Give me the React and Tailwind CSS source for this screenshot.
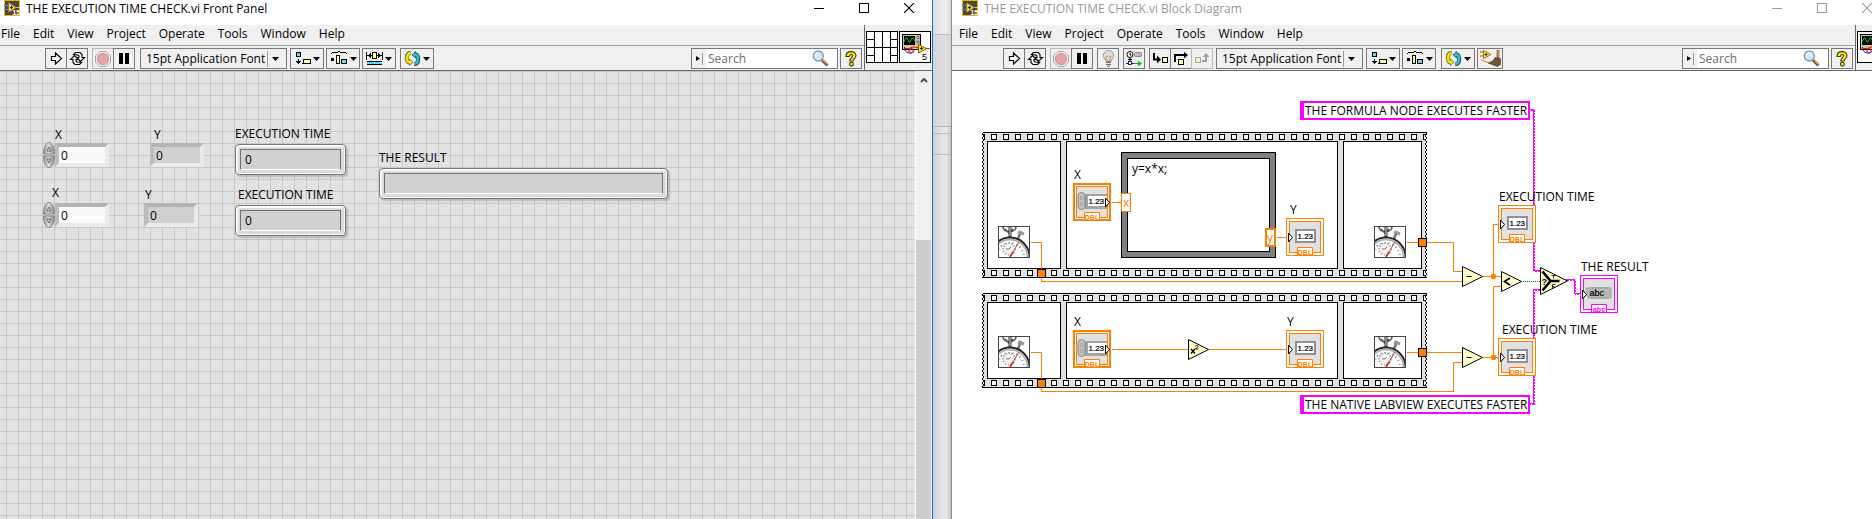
import React from "react";

const ORANGE = "#ff7f00";
const PINK = "#ff00ff";

/* ---------- icons ---------- */

function AppIcon() {
  return (
    <svg className="h-4 w-4 shrink-0" viewBox="0 0 16 16" aria-hidden="true">
      <rect width="16" height="16" fill="#f5b400" />
      <rect x="1" y="1" width="14" height="14" fill="#474747" />
      <path d="M0 5.5h5M0 9.5h5" stroke="#2a8fd0" strokeWidth="1.6" />
      <path d="M11 7.5h5" stroke="#ffd24a" strokeWidth="1" />
      <path d="M4.500 2.500v10l8-5z" fill="#ffc93c" stroke="#8a6508" strokeWidth=".6" />
      <path d="M6 7.500h3M7.500 6v3" stroke="#222" strokeWidth="1" />
      <text x="8.600" y="14.600" fontSize="6.500" fontWeight="700" fill="#fff" fontFamily="Liberation Sans, sans-serif">15</text>
    </svg>
  );
}

function RunIcon() {
  return (
    <svg width="13" height="13" viewBox="0 0 13 13" aria-hidden="true">
      <path d="M1.500 4.500h4v-3.500l6 5.500-6 5.500v-3.500h-4z" fill="#fff" stroke="#000" strokeWidth="1.200" />
    </svg>
  );
}

function ContinuousIcon() {
  return (
    <svg width="17" height="15" viewBox="0 0 17 15" aria-hidden="true">
      <g fill="#fff" stroke="#000" strokeWidth="1.100">
        <path d="M4.500 3.500l2-2h4.500l2 2v3h2.500l-4 4-4-4h2.500v-1.500l-1-1z" />
        <path d="M12.500 11.500l-2 2H6l-2-2v-3H1.500l4-4 4 4H7v1.500l1 1z" />
      </g>
    </svg>
  );
}

function AbortIcon() {
  return (
    <svg width="16" height="16" viewBox="0 0 16 16" aria-hidden="true">
      <path d="M5 .5h6L15.500 5v6L11 15.500H5L.5 11V5z" fill="#f2eaea" stroke="#a5a5a5" />
      <circle cx="8" cy="8" r="5.600" fill="#e2a4a8" stroke="#cd9296" />
    </svg>
  );
}

function PauseIcon() {
  return (
    <svg width="10" height="11" viewBox="0 0 10 11" aria-hidden="true">
      <path d="M0 0h4v11H0zM6 0h4v11H6z" fill="#000" />
    </svg>
  );
}

function Caret() {
  return (
    <svg className="shrink-0" width="7" height="4" viewBox="0 0 7 4" aria-hidden="true">
      <path d="M0 0h7L3.500 4z" fill="#000" />
    </svg>
  );
}

function AlignIcon() {
  return (
    <svg width="16" height="15" viewBox="0 0 16 15" aria-hidden="true" shapeRendering="crispEdges">
      <rect x="1.500" y="1.500" width="4" height="4" fill="#5fdcf5" stroke="#000" />
      <path d="M3.500 8v5M1 10.500h5M2 11.500h3M7 12.500h1" stroke="#000" />
      <rect x="8.500" y="8.500" width="7" height="4" fill="#ffff9c" stroke="#000" />
    </svg>
  );
}

function DistributeIcon() {
  return (
    <svg width="18" height="15" viewBox="0 0 18 15" aria-hidden="true" shapeRendering="crispEdges">
      <path d="M1 2.500h1M2 1.500h6M8 .5h2M10 1.500h6M16 2.500h1" stroke="#000" />
      <rect x="1" y="7" width="3" height="3" fill="#000" />
      <rect x="6.500" y="4.500" width="3" height="8" fill="#ffff9c" stroke="#000" />
      <rect x="11.500" y="8.500" width="5" height="4" fill="#5fdcf5" stroke="#000" />
    </svg>
  );
}

function ResizeIcon() {
  return (
    <svg width="17" height="15" viewBox="0 0 17 15" aria-hidden="true" shapeRendering="crispEdges">
      <path d="M.5 1v8M16.500 1v8M1 4.500h5M11 4.500h5M3.500 3v3M4.500 2v5M12.500 2v5M13.500 3v3" stroke="#000" />
      <rect x="6.500" y="1.500" width="4" height="6" fill="#ffff9c" stroke="#000" />
      <path d="M1 10.500h15M1 13.500h15" stroke="#000" />
      <path d="M1 12h15" stroke="#5fdcf5" strokeWidth="2" />
    </svg>
  );
}

function ReorderIcon() {
  return (
    <svg width="17" height="15" viewBox="0 0 17 15" aria-hidden="true">
      <path d="M7 1.500C3.500 2 2.500 5 3 8.500c.3 2 1.500 3 3 3.200" stroke="#7b760c" strokeWidth="4" fill="none" />
      <path d="M5.500 8v6.500L9 11z" fill="#efe51f" stroke="#7b760c" strokeWidth=".8" />
      <path d="M6.800 1.700C3.500 2.500 2.700 5 3.100 8.500c.3 1.800 1.400 2.800 3 3" stroke="#efe51f" strokeWidth="2.400" fill="none" />
      <path d="M10 13.500c3.500-.5 4.500-3.500 4-7-.3-2-1.500-3-3-3.200" stroke="#14616e" strokeWidth="4" fill="none" />
      <path d="M11.500 7V.5L8 4z" fill="#3fb9cc" stroke="#14616e" strokeWidth=".8" />
      <path d="M10.200 13.300c3.300-.8 4.100-3.300 3.700-6.800-.3-1.800-1.400-2.800-3-3" stroke="#3fb9cc" strokeWidth="2.400" fill="none" />
    </svg>
  );
}

function BulbIcon() {
  return (
    <svg width="13" height="17" viewBox="0 0 13 17" aria-hidden="true">
      <path d="M6.500.5a5 5 0 0 1 3.600 8.600L9 11.500H4L2.900 9.100A5 5 0 0 1 6.500.5z" fill="#dedede" stroke="#9a9a9a" />
      <path d="M4 6l1 5h3l1-5-2 1.500-1-1z" fill="#f6d79a" stroke="#b4905c" strokeWidth=".7" />
      <path d="M4 12.500h5M4 14.500h5M5 16.200h3" stroke="#6c6c6c" />
    </svg>
  );
}

function RetainIcon() {
  return (
    <svg width="17" height="15" viewBox="0 0 17 15" aria-hidden="true">
      <circle cx="4" cy="3.500" r="3" fill="#fff" stroke="#000" />
      <path d="M4 2v2h1.500M4 6.500v4M2 8.500h4" stroke="#000" fill="none" />
      <rect x="8.500" y="1.500" width="7" height="4" rx="1" fill="#bbb" stroke="#888" />
      <path d="M0 12.500h8" stroke="#0010e0" />
      <path d="M8 12.500h5" stroke="#10b010" />
      <rect x="2.500" y="10.500" width="3" height="3" fill="#fff" stroke="#000" strokeWidth=".8" />
      <path d="M12 9.500v6l4-3z" fill="#12c412" />
    </svg>
  );
}

function StepIntoIcon() {
  return (
    <svg width="17" height="13" viewBox="0 0 17 13" aria-hidden="true">
      <path d="M2 1v6.500h4" stroke="#000" strokeWidth="2" fill="none" />
      <path d="M5 3.500l4 4-4 4z" fill="#000" />
      <rect x="10.500" y="5.500" width="5" height="5" fill="#ffff9c" stroke="#000" />
    </svg>
  );
}

function StepOverIcon() {
  return (
    <svg width="17" height="14" viewBox="0 0 17 14" aria-hidden="true">
      <path d="M2 10V3h10" stroke="#000" strokeWidth="2" fill="none" />
      <path d="M11 0l4 3-4 3.500z" fill="#000" />
      <rect x="5.500" y="7.500" width="5" height="5" fill="#ffff9c" stroke="#000" />
    </svg>
  );
}

function StepOutIcon() {
  return (
    <svg width="17" height="13" viewBox="0 0 17 13" aria-hidden="true">
      <rect x="1.500" y="5.500" width="5" height="5" fill="#f6f3c4" stroke="#a8a8a8" />
      <path d="M8 9h4V4" stroke="#a0a0a0" strokeWidth="2" fill="none" />
      <path d="M8.500 5l3.500-4 3.500 4z" fill="#a0a0a0" />
    </svg>
  );
}

function CleanUpIcon() {
  return (
    <svg width="21" height="17" viewBox="0 0 21 17" aria-hidden="true">
      <path d="M0 2h4M0 6h4" stroke="#e02020" />
      <path d="M3.500.5v8l7.500-4z" fill="#fff23a" stroke="#8a7a00" />
      <path d="M4.500 4.500h3M6 3v3" stroke="#000" strokeWidth=".8" />
      <path d="M17 0h2v8h-2z" fill="#c39a5a" stroke="#6b4a1c" strokeWidth=".6" />
      <path d="M15 7.500l5.500 1v6l-3 2L8 13l5-2z" fill="#6d5435" stroke="#3f2d16" strokeWidth=".6" />
      <path d="M1 10l8 3" stroke="#e08030" />
    </svg>
  );
}

function SearchIcon() {
  return (
    <svg className="shrink-0" width="17" height="17" viewBox="0 0 17 17" aria-hidden="true">
      <path d="M10 10l5.500 5.500" stroke="#7a4a2a" strokeWidth="3" />
      <path d="M10.500 9.500l5 5" stroke="#e59a45" strokeWidth="1.400" />
      <circle cx="6.300" cy="6" r="5" fill="#cfeafc" stroke="#7d9ab5" strokeWidth="1.300" />
      <path d="M3.500 5.500a3 3 0 0 1 3-2.500" stroke="#fff" strokeWidth="1.400" fill="none" />
    </svg>
  );
}

function HelpIcon() {
  return (
    <svg width="12" height="16" viewBox="0 0 12 16" aria-hidden="true">
      <path d="M1 5.500C1 1.500 3.500 .6 6 .6s5 1.200 5 4.200c0 2.600-3 3-3 5.200H4.800C4.800 6.800 7.600 6.500 7.600 4.800 7.600 3 4.400 3 4.400 5.500z" fill="#ffee10" stroke="#3a3a00" strokeWidth="1.100" />
      <circle cx="6.400" cy="13.200" r="1.900" fill="#ffee10" stroke="#3a3a00" strokeWidth="1.100" />
    </svg>
  );
}

function ConnectorPane() {
  return (
    <svg className="shrink-0" width="32" height="32" viewBox="0 0 32 32" aria-hidden="true" shapeRendering="crispEdges">
      <rect x=".5" y=".5" width="31" height="31" fill="#fff" stroke="#000" />
      <path d="M8.500 0v32M16.500 0v32M24.500 0v32M0 16.500h32M0 8.500h8M0 24.500h8M24 8.500h8M24 24.500h8" stroke="#000" />
    </svg>
  );
}

function ViIcon({ index }) {
  return (
    <svg className="shrink-0" width="32" height="32" viewBox="0 0 32 32" aria-hidden="true">
      <rect x=".5" y=".5" width="31" height="31" fill="#fff" stroke="#000" />
      <rect x="3.500" y="3.500" width="18" height="15" fill="#cdc9a5" stroke="#000" />
      <rect x="5" y="5" width="11" height="9" fill="#000" />
      <path d="M5 11l2-4h1l2 4h1l2-4h1l2 3" stroke="#10d030" fill="none" />
      <circle cx="19" cy="6.500" r="1.200" fill="#fff" stroke="#000" strokeWidth=".6" />
      <circle cx="19" cy="11" r="1.200" fill="#fff" stroke="#000" strokeWidth=".6" />
      <path d="M5.500 16v2.500c2 4.500 9 4.500 10 1" stroke="#1010c8" fill="none" />
      <path d="M5 17.500h5l4-1.500 5 .5h2M10 21c0-4 4-5 4-1.500s-4 3-4 0" stroke="#e81010" fill="none" />
      <path d="M27 17.500h4" stroke="#e81010" />
      <path d="M19.500 13.500v8.500l8-4.300z" fill="#ffee10" stroke="#6a6000" />
      <path d="M21 17.500h3M22.500 16v3" stroke="#000" strokeWidth=".9" />
      {index && <text x="23" y="29" fontSize="9" fontFamily="Liberation Sans, sans-serif" fill="#000">{index}</text>}
    </svg>
  );
}

/* ---------- window chrome ---------- */

function TitleBar({ title, active, inset }) {
  const stroke = active ? "#000" : "#999";
  return (
    <header className={`flex h-[25px] items-start bg-white ${inset ? "pl-[10px]" : "pl-1"}`}>
      <AppIcon />
      <h1 className={`ml-[6px] flex-1 text-[12px] leading-[17px] whitespace-nowrap ${active ? "text-black" : "text-[#999]"}`}>{title}</h1>
      <div className="flex">
        <button type="button" aria-label="Minimize" className="flex h-4 w-[45px] items-center justify-center">
          <svg width="10" height="10"><path d="M0 5.500h10" stroke={stroke} /></svg>
        </button>
        <button type="button" aria-label="Maximize" className="flex h-4 w-[45px] items-center justify-center">
          <svg width="10" height="10"><rect x=".5" y=".5" width="9" height="9" fill="none" stroke={stroke} /></svg>
        </button>
        <button type="button" aria-label="Close" className="flex h-4 w-[46px] items-center justify-center">
          <svg width="10" height="10"><path d="M0 0l10 10M10 0L0 10" stroke={stroke} strokeWidth="1.200" /></svg>
        </button>
      </div>
    </header>
  );
}

const MENUS = ["File", "Edit", "View", "Project", "Operate", "Tools", "Window", "Help"];

function MenuBar({ inset }) {
  return (
    <nav className={`flex h-5 items-start gap-[13px] pt-px ${inset ? "pl-[7px]" : "pl-px"}`}>
      {MENUS.map((m) => (
        <button key={m} type="button" className="text-[12px] leading-4">{m}</button>
      ))}
    </nav>
  );
}

function Tool({ label, children, faded, join, wide }) {
  return (
    <button
      type="button"
      aria-label={label}
      disabled={faded}
      className={`flex h-[21px] shrink-0 items-center justify-center border ${wide ? "w-[26px]" : "w-[22px]"} ${join ? "-ml-px" : ""} ${faded ? "border-[#b9b9b9]" : "border-[#787878]"}`}
    >
      {children}
    </button>
  );
}

function MenuTool({ label, children }) {
  return (
    <button type="button" aria-label={label} aria-haspopup="menu" className="flex h-[21px] w-[34px] shrink-0 items-center justify-center gap-[2px] border border-[#787878]">
      {children}
      <Caret />
    </button>
  );
}

function FontSelect() {
  return (
    <div className="flex h-[21px] w-[147px] shrink-0 items-center border border-[#787878] pr-[7px]">
      <select aria-label="Text settings" className="min-w-0 flex-1 appearance-none bg-transparent pl-[5px] text-[12px] leading-4" defaultValue="15pt Application Font">
        <option>15pt Application Font</option>
      </select>
      <span className="mr-1 h-4 w-px bg-[#9a9a9a]" />
      <Caret />
    </div>
  );
}

function SearchBox() {
  return (
    <div className="flex items-center gap-[2px] pr-[2px]">
      <div className="flex h-[21px] w-[147px] items-center border border-[#787878] bg-white">
        <button type="button" aria-label="Search scope" className="flex h-full w-[14px] items-center gap-[2px] bg-[#f0f0f0] pl-1">
          <svg width="4" height="5"><path d="M0 0v5l4-2.500z" fill="#000" /></svg>
          <span className="h-3 w-px bg-[#9a9a9a]" />
        </button>
        <input type="search" aria-label="Search" placeholder="Search" className="min-w-0 flex-1 bg-transparent pl-[2px] text-[12px] leading-4 placeholder:text-[#6d6d6d] focus:outline-none" />
        <span className="mr-2 flex"><SearchIcon /></span>
      </div>
      <Tool label="Context help"><HelpIcon /></Tool>
    </div>
  );
}

function Chrome({ inset, tools, pane }) {
  return (
    <div className="flex border-b border-[#696969] bg-[#f0f0f0]">
      <div className="flex min-w-0 flex-1 flex-col">
        <MenuBar inset={inset} />
        <div className={`flex items-center justify-between border-t border-[#a0a0a0] pt-[2px] pb-px ${inset ? "pl-[51px]" : "pl-[45px]"}`}>
          <div className="flex items-center">{tools}</div>
          <SearchBox />
        </div>
      </div>
      <div className="flex gap-px border-l border-[#696969] pt-[6px] pr-px pl-px">{pane}</div>
    </div>
  );
}

/* ---------- front panel ---------- */

function Spinner() {
  return (
    <svg className="shrink-0" width="12" height="26" viewBox="0 0 12 26" aria-hidden="true">
      <defs>
        <linearGradient id="knob" x1="0" x2="1">
          <stop offset="0" stopColor="#8d8d8d" />
          <stop offset=".45" stopColor="#dcdcdc" />
          <stop offset="1" stopColor="#868686" />
        </linearGradient>
      </defs>
      <path d="M.5 12C.5 5 3 .5 6 .5S11.500 5 11.500 12z" fill="url(#knob)" stroke="#8a8a8a" />
      <path d="M.5 14C.5 21 3 25.500 6 25.500S11.500 21 11.500 14z" fill="url(#knob)" stroke="#8a8a8a" />
      <path d="M4 9l2-4 2 4z" fill="#d5d5d5" stroke="#555" strokeWidth=".8" />
      <path d="M4 17l2 4 2-4z" fill="#d5d5d5" stroke="#555" strokeWidth=".8" />
    </svg>
  );
}

const BEVEL = "h-6 w-[54px] border-4 border-t-[#b4b4b4] border-r-[#ebebeb] border-b-[#ebebeb] border-l-[#bcbcbc]";

function NumericControl({ id, label, place, labelPlace }) {
  return (
    <>
      <label htmlFor={id} className={`absolute text-[12px] leading-4 ${labelPlace}`}>{label}</label>
      <div className={`absolute flex items-center ${place}`}>
        <Spinner />
        <input id={id} defaultValue="0" inputMode="decimal" className={`${BEVEL} bg-[#fafafa] pl-[2px] text-[12px] leading-4`} />
      </div>
    </>
  );
}

function NumericIndicator({ id, label, place, labelPlace }) {
  return (
    <>
      <label htmlFor={id} className={`absolute text-[12px] leading-4 ${labelPlace}`}>{label}</label>
      <output id={id} className={`absolute bg-[#d0d0d0] pl-[2px] text-[12px] leading-[17px] ${BEVEL} ${place}`}>0</output>
    </>
  );
}

function FramedIndicator({ id, label, value, place, labelPlace }) {
  return (
    <>
      <label htmlFor={id} className={`absolute text-[12px] leading-4 whitespace-nowrap ${labelPlace}`}>{label}</label>
      <div className={`absolute h-[31px] rounded-[4px] border border-[#7c7c7c] bg-[#dcdcdc] p-1 shadow-[2px_2px_2px_#00000030,inset_1px_1px_0_1px_#fafafa,inset_-1px_-1px_0_#f4f4f4] ${place}`}>
        <output id={id} className="block h-full border border-t-[#707070] border-r-[#707070] border-b-white border-l-[#707070] bg-[#d1d1d1] pl-1 text-[12px] leading-5">{value}</output>
      </div>
    </>
  );
}

function FrontPanel() {
  return (
    <section className="flex w-[calc(50%-3px)] shrink-0 flex-col border-r border-[#0078d7]">
      <TitleBar title="THE EXECUTION TIME CHECK.vi Front Panel" active />
      <Chrome
        tools={
          <>
            <Tool label="Run"><RunIcon /></Tool>
            <Tool label="Run continuously" join><ContinuousIcon /></Tool>
            <span className="w-1" />
            <Tool label="Abort" faded><AbortIcon /></Tool>
            <Tool label="Pause" join><PauseIcon /></Tool>
            <span className="w-[5px]" />
            <FontSelect />
            <div className="ml-[3px] flex gap-[2px]">
              <MenuTool label="Align objects"><AlignIcon /></MenuTool>
              <MenuTool label="Distribute objects"><DistributeIcon /></MenuTool>
              <MenuTool label="Resize objects"><ResizeIcon /></MenuTool>
            </div>
            <span className="w-1" />
            <MenuTool label="Reorder"><ReorderIcon /></MenuTool>
          </>
        }
        pane={<><ConnectorPane /><ViIcon index="5" /></>}
      />
      <div className="flex flex-1">
        <main className="relative flex-1 bg-[#e2e2e2] bg-[linear-gradient(to_right,#c8c8c8_1px,transparent_1px),linear-gradient(to_bottom,#c8c8c8_1px,transparent_1px)] bg-[size:12px_12px] bg-[position:6px_0]">
          <NumericControl id="x1" label="X" labelPlace="left-[55px] top-[56px]" place="left-[43px] top-[71px]" />
          <NumericIndicator id="y1" label="Y" labelPlace="left-[154px] top-[56px]" place="left-[150px] top-[72px]" />
          <FramedIndicator id="t1" label="EXECUTION TIME" value="0" labelPlace="left-[235px] top-[55px]" place="left-[235px] top-[73px] w-[111px]" />
          <NumericControl id="x2" label="X" labelPlace="left-[52px] top-[114px]" place="left-[43px] top-[131px]" />
          <NumericIndicator id="y2" label="Y" labelPlace="left-[145px] top-[116px]" place="left-[144px] top-[132px]" />
          <FramedIndicator id="t2" label="EXECUTION TIME" value="0" labelPlace="left-[238px] top-[116px]" place="left-[235px] top-[134px] w-[111px]" />
          <FramedIndicator id="res" label="THE RESULT" value="" labelPlace="left-[379px] top-[79px]" place="left-[379px] top-[97px] w-[289px]" />
        </main>
        <div className="flex w-[17px] flex-col border-l border-white bg-[#f0f0f0] pr-px">
          <button type="button" aria-label="Scroll up" className="flex h-[17px] justify-center pt-[6px]">
            <svg width="8" height="6"><path d="M1 5l3-3 3 3" fill="none" stroke="#505050" strokeWidth="2" /></svg>
          </button>
          <div className="mt-[152px] flex-1 bg-[#cdcdcd]" />
        </div>
      </div>
    </section>
  );
}

/* ---------- block diagram ---------- */

function Holes({ y }) {
  const cells = [];
  for (let x = 991; x < 1420; x += 12) cells.push(x);
  return (
    <g fill="#fff" stroke="#000">
      {cells.map((x) => <rect key={x} x={x} y={y} width="5" height="5" />)}
      <path d={`M982 ${y}h2v5h-2M1426 ${y}h-3v5h3`} />
    </g>
  );
}

function Sequence({ y, h }) {
  return (
    <g shapeRendering="crispEdges">
      <rect x="982" y={y} width="444" height={h} fill="#e1e1e1" />
      <path d={`M982 ${y}h444M982 ${y + h}h444`} stroke="#000" />
      <Holes y={y + 2} />
      <Holes y={y + h - 7} />
      <path d={`M982 ${y}v${h}M1426 ${y}v${h}`} stroke="#fff" />
      <path d={`M982 ${y}v${h}M1426 ${y}v${h}`} stroke="#000" strokeDasharray="2 2" />
      <path d={`M983 ${y + 2}v${h - 3}M1425 ${y + 2}v${h - 3}`} stroke="#000" strokeDasharray="2 2" />
      <g fill="#fff" stroke="#000">
        <rect x="987" y={y + 9} width="73" height={h - 18} />
        <rect x="1066" y={y + 9} width="271" height={h - 18} />
        <rect x="1343" y={y + 9} width="78" height={h - 18} />
      </g>
    </g>
  );
}

function Stopwatch({ x, y }) {
  return (
    <svg x={x} y={y} width="32" height="32" viewBox="0 0 32 32">
      <rect width="32" height="32" fill="#fff" />
      <path d="M5 1c0 6 13 6 13 0M7 3l4 4 4-4" stroke="#555" strokeWidth="1.600" fill="none" />
      <path d="M12 0v12" stroke="#333" strokeWidth="3" />
      <path d="M12 1v9" stroke="#ddd" strokeWidth="1" />
      <path d="M23 5l-3 8" stroke="#777" strokeWidth="2.500" />
      <path d="M20 6l6 2" stroke="#999" strokeWidth="3" />
      <circle cx="12" cy="31" r="19.500" fill="#fff" stroke="#222" strokeWidth="2" />
      <circle cx="12" cy="31" r="17.500" fill="none" stroke="#b0b0b0" strokeWidth="2" />
      <circle cx="12" cy="31" r="14" fill="none" stroke="#777" strokeWidth="2" strokeDasharray="1 3" />
      <circle cx="11" cy="23" r="6" fill="#f4f4f4" stroke="#999" strokeWidth="1.500" strokeDasharray="1.500 1.500" />
      <path d="M11 23l2-2M11 23h-3" stroke="#555" strokeWidth=".8" />
      <path d="M12 31l9-15" stroke="#a33" strokeWidth=".9" />
      <path d="M12 31l3-5" stroke="#e01818" strokeWidth="1.500" />
      <rect x=".5" y=".5" width="31" height="31" fill="none" stroke="#444" />
    </svg>
  );
}

function Terminal({ x, y, kind }) {
  const control = kind === "control";
  const text = kind === "string";
  const c = text ? PINK : ORANGE;
  return (
    <svg x={x} y={y} width="38" height="38" viewBox="0 0 38 38">
      <rect width="38" height="38" fill={c} />
      <rect x={control ? 2 : 1} y={control ? 2 : 1} width={control ? 34 : 36} height={control ? 34 : 36} fill="#fff" />
      <rect x="3.500" y="3.500" width="31" height="31" fill="#e1e1e1" stroke={c} />
      {control && (
        <>
          <rect x="12" y="11" width="22" height="15" fill="#a4a4a4" />
          <rect x="15" y="13" width="19" height="10" fill="#fff" />
          <rect x="5" y="9.500" width="7" height="17" rx="3.500" fill="#c4c4c4" stroke="#777" strokeWidth=".8" />
          <path d="M7 16l1.500-3 1.500 3zM7 20l1.500 3 1.500-3z" fill="#eee" stroke="#777" strokeWidth=".6" />
          <path d="M32.500 15v9l4-4.500z" fill="#fff" stroke="#000" />
        </>
      )}
      {!control && (
        <>
          <rect x="10" y="12" width="19" height="12" fill={text ? "#b4b4b4" : "#fff"} stroke="#909090" strokeWidth={text ? 0 : 2} />
          {text && <path d="M6 13h25v10H8z" fill="#b8b8b8" stroke="#a0a0a0" />}
          <path d="M2.500 15v9l4-4.500z" fill="#fff" stroke="#000" />
        </>
      )}
      <text x={control ? 15.5 : text ? 9.5 : 11.5} y="21" fontSize={text ? 9 : 8} fontFamily="Liberation Sans, sans-serif" fill="#000" stroke="#000" strokeWidth=".2">
        {text ? "abc" : "1.23"}
      </text>
      <path d="M11.500 37v-7.500h15V37" fill="#fff" stroke={c} />
      <text x="19" y="36.500" textAnchor="middle" fontSize="7" fontWeight="700" fontFamily="Liberation Sans, sans-serif" fill={c}>
        {text ? "abc" : "DBL"}
      </text>
      <path d="M11 37.500h16" stroke={c} />
    </svg>
  );
}

function Node({ x, y, children }) {
  return (
    <g transform={`translate(${x} ${y})`}>
      <path d="M0 0v20l20-10z" fill="#ffffcc" stroke="#000" />
      {children}
    </g>
  );
}

const STRING_WIRES = "M1527 110h7v161h6M1528 404h6V290h6M1566 280h9v14h6";

function Drawing() {
  return (
    <svg className="absolute inset-0 h-full w-full" aria-hidden="true">
      <g transform="translate(-951.5 -70.5)">
        <Sequence y={132} h={145} />
        <Sequence y={293} h={94} />

        <g fill="none" stroke={PINK} shapeRendering="crispEdges">
          <path d={STRING_WIRES} transform="translate(-1 -1)" />
          <path d={STRING_WIRES} strokeDasharray="2 1" />
        </g>

        <g fill="none" stroke={ORANGE} shapeRendering="crispEdges">
          <path d="M1030 242h11v39h421" />
          <path d="M1406 242h47v29h9" />
          <path d="M1482 276h19M1498 224h-5v52" />
          <path d="M1501 286h-8v71M1482 357h16" />
          <path d="M1030 352h11v39h412v-29h9" />
          <path d="M1406 352h56" />
          <path d="M1111 202h10M1276 237h10M1111 349h175" />
        </g>
        <circle cx="1493" cy="276" r="2.800" fill={ORANGE} />
        <circle cx="1493" cy="357" r="2.800" fill={ORANGE} />
        <path d="M1522 281h18" stroke="#007f00" strokeDasharray="1 1" shapeRendering="crispEdges" />

        <g fill={ORANGE} stroke="#000" shapeRendering="crispEdges">
          <rect x="1037" y="269" width="8" height="8" />
          <rect x="1418" y="238" width="8" height="8" />
          <rect x="1037" y="379" width="8" height="8" />
          <rect x="1418" y="348" width="8" height="8" />
        </g>

        <Node x={1462} y={266}><path d="M4 10h5" stroke="#000" /></Node>
        <Node x={1462} y={347}><path d="M4 10h5" stroke="#000" /></Node>
        <Node x={1501} y={271}><path d="M8.500 6.500L3 10l5.500 3.500" fill="none" stroke="#000" strokeWidth="1.700" /></Node>
        <Node x={1188} y={339}>
          <path d="M2.500 9.500l4 4.500M6.500 9.500l-4 4.500" fill="none" stroke="#000" strokeWidth="1.300" />
          <path d="M7 7c0-1.500 2.500-1.500 2.500 0 0 1-2.500 1.500-2.500 2.500h3" fill="none" stroke="#000" strokeWidth=".9" />
        </Node>
        <g>
          <path d="M1540 267v27l27-13.500z" fill="#ffffcc" stroke="#000" />
          <path d="M1542 271l8 9.500-8 9.500M1550 280.500h9" fill="none" stroke="#000" strokeWidth="2.600" />
          <text x="1541" y="284" fontSize="9" fontWeight="700" fontFamily="Liberation Sans, sans-serif">?</text>
          <path d="M1551 275h4M1553 275v3M1552 284v4M1552 284h3M1552 286h2" stroke="#000" strokeWidth=".8" fill="none" />
        </g>
      </g>

      <g transform="translate(-952 -71)">
        <Stopwatch x={998} y={226} />
        <Stopwatch x={1374} y={226} />
        <Stopwatch x={998} y={336} />
        <Stopwatch x={1374} y={336} />

        <g shapeRendering="crispEdges">
          <rect x="1121.500" y="152.500" width="154" height="105" fill="#808080" stroke="#000" />
          <rect x="1127.500" y="158.500" width="142" height="93" fill="#fff" stroke="#000" />
          <rect x="1121.500" y="193.500" width="9" height="18" fill="#fff" stroke={ORANGE} />
          <rect x="1266" y="229" width="9" height="17" fill="#fff" stroke={ORANGE} strokeWidth="2" />
        </g>

        <Terminal x={1073} y={183} kind="control" />
        <Terminal x={1073} y={330} kind="control" />
        <Terminal x={1286} y={218} kind="indicator" />
        <Terminal x={1286} y={330} kind="indicator" />
        <Terminal x={1498} y={205} kind="indicator" />
        <Terminal x={1498} y={338} kind="indicator" />
        <Terminal x={1580} y={275} kind="string" />
      </g>
    </svg>
  );
}

const DIAGRAM_LABELS = [
  { text: "X", place: "left-[122px] top-[96px]" },
  { text: "y=x*x;", place: "left-[180px] top-[90px]" },
  { text: "Y", place: "left-[338px] top-[131px]" },
  { text: "X", place: "left-[122px] top-[243px]" },
  { text: "Y", place: "left-[335px] top-[243px]" },
  { text: "EXECUTION TIME", place: "left-[547px] top-[118px]" },
  { text: "EXECUTION TIME", place: "left-[550px] top-[251px]" },
  { text: "THE RESULT", place: "left-[629px] top-[188px]" },
  { text: "x", place: "left-[171px] top-[124px] text-[#ff7f00]" },
  { text: "y", place: "left-[315px] top-[159px] text-[#ff7f00]" },
];

function StringConstant({ text, place }) {
  return (
    <div className={`absolute h-[19px] border-2 border-l-4 border-[#ff00ff] bg-white px-px text-[12px] leading-4 whitespace-nowrap ${place}`}>
      {text}
    </div>
  );
}

function BlockDiagram() {
  return (
    <section className="-mr-[18px] flex min-w-0 flex-1 flex-col">
      <TitleBar title="THE EXECUTION TIME CHECK.vi Block Diagram" inset />
      <Chrome
        inset
        tools={
          <>
            <Tool label="Run"><RunIcon /></Tool>
            <Tool label="Run continuously" join><ContinuousIcon /></Tool>
            <span className="w-1" />
            <Tool label="Abort" faded><AbortIcon /></Tool>
            <Tool label="Pause" join><PauseIcon /></Tool>
            <div className="mx-1 flex gap-1">
              <Tool label="Highlight execution"><BulbIcon /></Tool>
              <Tool label="Retain wire values"><RetainIcon /></Tool>
            </div>
            <Tool label="Step into"><StepIntoIcon /></Tool>
            <Tool label="Step over" join><StepOverIcon /></Tool>
            <Tool label="Step out" join faded><StepOutIcon /></Tool>
            <span className="w-[3px]" />
            <FontSelect />
            <div className="ml-[3px] flex gap-[2px]">
              <MenuTool label="Align objects"><AlignIcon /></MenuTool>
              <MenuTool label="Distribute objects"><DistributeIcon /></MenuTool>
            </div>
            <div className="ml-[5px] flex gap-[2px]">
              <MenuTool label="Reorder"><ReorderIcon /></MenuTool>
              <Tool label="Clean up diagram" wide><CleanUpIcon /></Tool>
            </div>
          </>
        }
        pane={<ViIcon />}
      />
      <main className="relative flex-1 bg-white">
        <Drawing />
        {DIAGRAM_LABELS.map((l) => (
          <span key={l.place} className={`absolute text-[12px] leading-4 whitespace-nowrap ${l.place}`}>{l.text}</span>
        ))}
        <StringConstant text="THE FORMULA NODE EXECUTES FASTER" place="left-[348px] top-[30px]" />
        <StringConstant text="THE NATIVE LABVIEW EXECUTES FASTER" place="left-[348px] top-[324px]" />
      </main>
    </section>
  );
}

/* strip of the desktop visible between the two windows */
function DesktopGap() {
  return (
    <div className="flex w-[19px] shrink-0 flex-col border-r border-[#8c8c8c] bg-[linear-gradient(to_right,#cfcfcf,#e4e4e4_50%,#e6e6e6_75%,#c4c4c4)]">
      <div className="h-[35px] border-b border-[#bcbdbf] bg-white/30" />
      <div className="h-[92px] border-b border-[#b4b5b7] bg-[#d5d8dc]/60" />
      <div className="h-[7px] border-b border-[#bcbcbc]" />
      <div className="h-[21px] border-b border-[#bcbcbc]" />
    </div>
  );
}

export default function App() {
  return (
    <div className="flex min-h-screen overflow-hidden bg-white font-['Open_Sans','Noto_Sans',sans-serif] text-black">
      <FrontPanel />
      <DesktopGap />
      <BlockDiagram />
    </div>
  );
}
